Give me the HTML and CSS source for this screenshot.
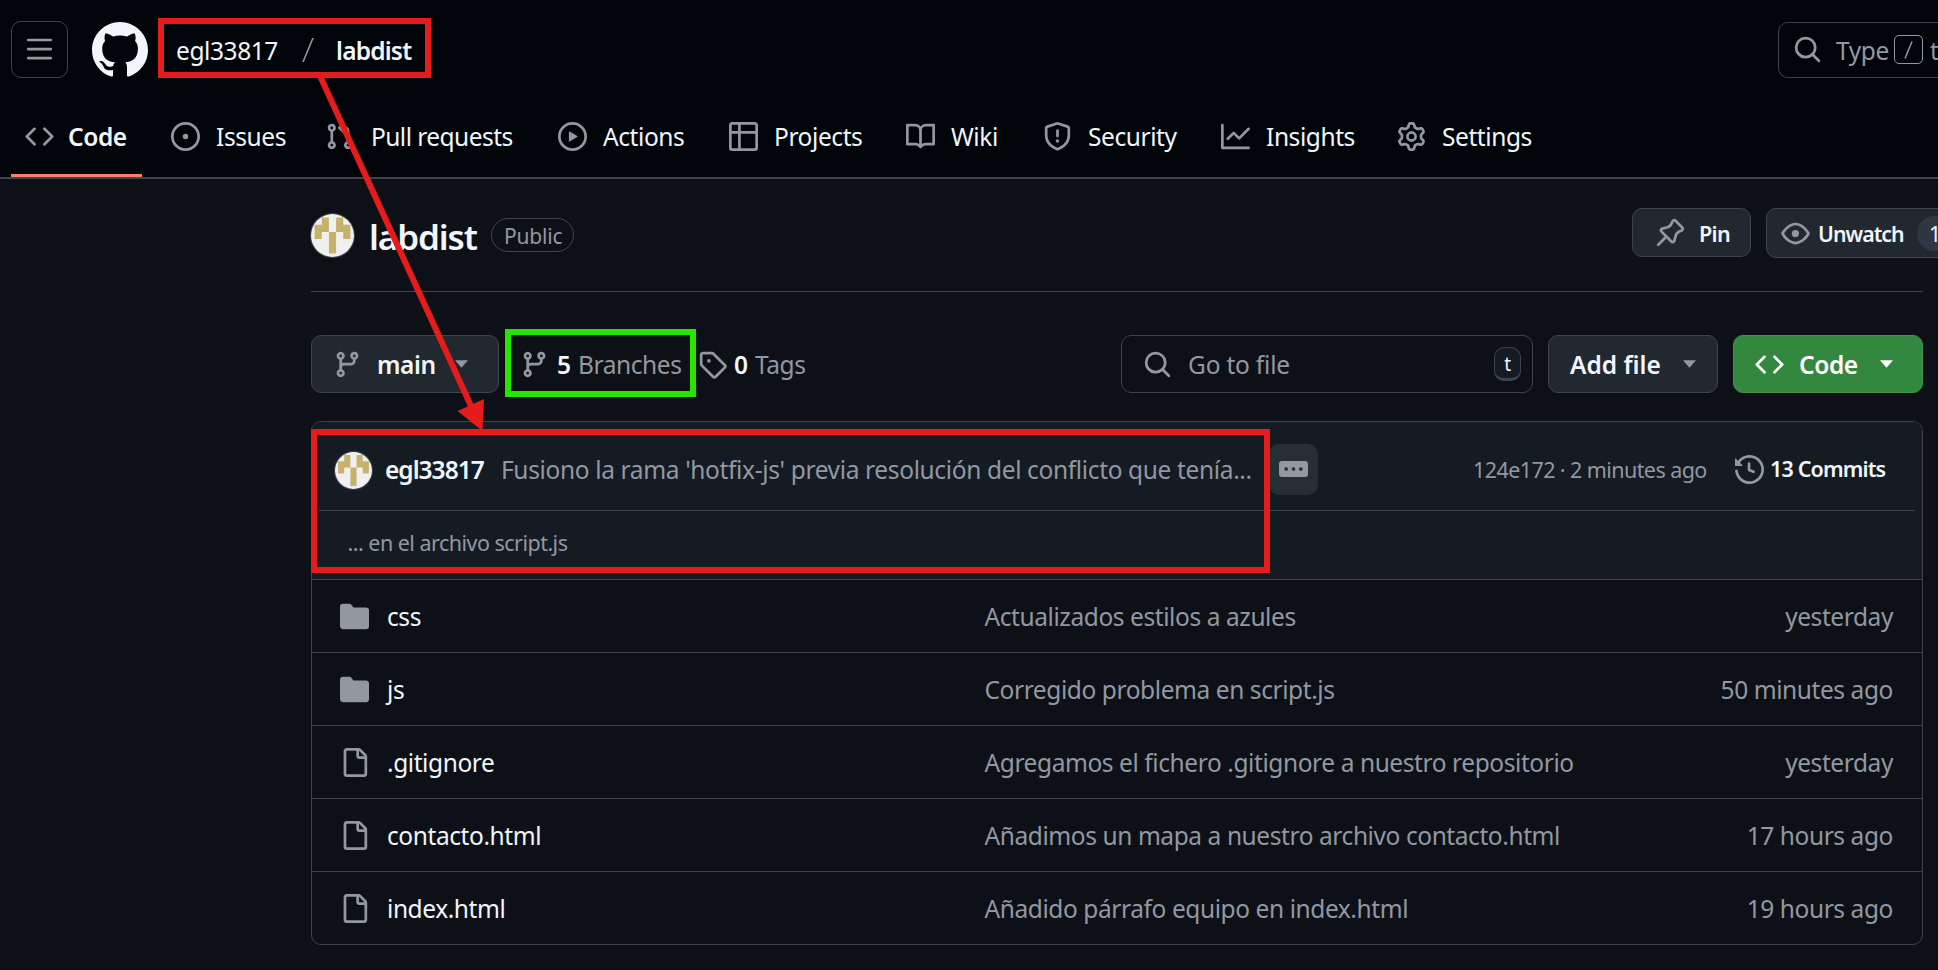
FILE: index.html
```html
<!DOCTYPE html>
<html lang="en">
<head>
<meta charset="utf-8">
<title>egl33817/labdist</title>
<link rel="stylesheet" href="styles.css">
</head>
<body>
<svg class="sprite" aria-hidden="true">
<symbol id="bars" viewBox="0 0 16 16"><path d="M1 2.75A.75.75 0 0 1 1.75 2h12.5a.75.75 0 0 1 0 1.5H1.75A.75.75 0 0 1 1 2.75Zm0 5A.75.75 0 0 1 1.75 7h12.5a.75.75 0 0 1 0 1.5H1.75A.75.75 0 0 1 1 7.75ZM1.75 12h12.5a.75.75 0 0 1 0 1.5H1.75a.75.75 0 0 1 0-1.5Z"/></symbol>
<symbol id="github" viewBox="0 0 16 16"><path d="M8 0c4.42 0 8 3.58 8 8a8.013 8.013 0 0 1-5.45 7.59c-.4.08-.55-.17-.55-.38 0-.27.01-1.13.01-2.2 0-.75-.25-1.23-.54-1.48 1.78-.2 3.65-.88 3.65-3.95 0-.88-.31-1.59-.82-2.15.08-.2.36-1.02-.08-2.12 0 0-.67-.22-2.2.82-.64-.18-1.32-.27-2-.27-.68 0-1.36.09-2 .27-1.53-1.03-2.2-.82-2.2-.82-.44 1.1-.16 1.92-.08 2.12-.51.56-.82 1.28-.82 2.15 0 3.06 1.86 3.75 3.64 3.95-.23.2-.44.55-.51 1.07-.46.21-1.61.55-2.33-.66-.15-.24-.6-.83-1.23-.82-.67.01-.27.38.01.53.34.19.73.9.82 1.13.16.45.68 1.31 2.69.94 0 .67.01 1.3.01 1.49 0 .21-.15.45-.55.38A7.995 7.995 0 0 1 0 8c0-4.42 3.58-8 8-8Z"/></symbol>
<symbol id="code" viewBox="0 0 16 16"><path d="M4.72 3.22a.75.75 0 0 1 1.06 1.06L2.06 8l3.72 3.72a.75.75 0 1 1-1.06 1.06L.47 8.53a.75.75 0 0 1 0-1.06Zm6.56 0a.75.75 0 1 0-1.06 1.06L13.94 8l-3.72 3.72a.75.75 0 1 0 1.06 1.06l4.25-4.25a.75.75 0 0 0 0-1.06Z"/></symbol>
<symbol id="issue" viewBox="0 0 16 16"><path d="M8 9.5a1.5 1.5 0 1 0 0-3 1.5 1.5 0 0 0 0 3Z"/><path d="M8 0a8 8 0 1 1 0 16A8 8 0 0 1 8 0ZM1.5 8a6.5 6.5 0 1 0 13 0 6.5 6.5 0 0 0-13 0Z"/></symbol>
<symbol id="pull" viewBox="0 0 16 16"><path d="M1.5 3.25a2.25 2.25 0 1 1 3 2.122v5.256a2.251 2.251 0 1 1-1.5 0V5.372A2.25 2.25 0 0 1 1.5 3.25Zm5.677-.177L9.573.677A.25.25 0 0 1 10 .854V2.5h1A2.5 2.5 0 0 1 13.5 5v5.628a2.251 2.251 0 1 1-1.5 0V5a1 1 0 0 0-1-1h-1v1.646a.25.25 0 0 1-.427.177L7.177 3.427a.25.25 0 0 1 0-.354ZM3.75 2.5a.75.75 0 1 0 0 1.5.75.75 0 0 0 0-1.5Zm0 9.5a.75.75 0 1 0 0 1.5.75.75 0 0 0 0-1.5Zm8.25.75a.75.75 0 1 0 1.5 0 .75.75 0 0 0-1.5 0Z"/></symbol>
<symbol id="play" viewBox="0 0 16 16"><path d="M8 0a8 8 0 1 1 0 16A8 8 0 0 1 8 0ZM1.5 8a6.5 6.5 0 1 0 13 0 6.5 6.5 0 0 0-13 0Zm4.879-2.773 4.264 2.559a.25.25 0 0 1 0 .428l-4.264 2.559A.25.25 0 0 1 6 10.559V5.442a.25.25 0 0 1 .379-.215Z"/></symbol>
<symbol id="table" viewBox="0 0 16 16"><path d="M0 1.75C0 .784.784 0 1.75 0h12.5C15.216 0 16 .784 16 1.75v12.5A1.75 1.75 0 0 1 14.25 16H1.75A1.75 1.75 0 0 1 0 14.25ZM6.5 6.5v8h7.75a.25.25 0 0 0 .25-.25V6.5Zm8-1.5V1.75a.25.25 0 0 0-.25-.25H6.5V5Zm-13 1.5v7.75c0 .138.112.25.25.25H5v-8ZM5 5V1.5H1.75a.25.25 0 0 0-.25.25V5Z"/></symbol>
<symbol id="book" viewBox="0 0 16 16"><path d="M0 1.75A.75.75 0 0 1 .75 1h4.253c1.227 0 2.317.59 3 1.501A3.743 3.743 0 0 1 11.006 1h4.245a.75.75 0 0 1 .75.75v10.5a.75.75 0 0 1-.75.75h-4.507a2.25 2.25 0 0 0-1.591.659l-.622.621a.75.75 0 0 1-1.06 0l-.622-.621A2.25 2.25 0 0 0 5.258 13H.75a.75.75 0 0 1-.75-.75Zm7.251 10.324.004-5.073-.002-2.253A2.25 2.25 0 0 0 5.003 2.5H1.5v9h3.757a3.75 3.75 0 0 1 1.994.574ZM8.755 4.75l-.004 7.322a3.752 3.752 0 0 1 1.992-.572H14.5v-9h-3.495a2.25 2.25 0 0 0-2.25 2.25Z"/></symbol>
<symbol id="shield" viewBox="0 0 16 16"><path d="M7.467.133a1.748 1.748 0 0 1 1.066 0l5.25 1.68A1.75 1.75 0 0 1 15 3.48V7c0 1.566-.32 3.182-1.303 4.682-.983 1.498-2.585 2.813-5.032 3.855a1.697 1.697 0 0 1-1.33 0c-2.447-1.042-4.049-2.357-5.032-3.855C1.32 10.182 1 8.566 1 7V3.48a1.75 1.75 0 0 1 1.217-1.667Zm.61 1.429a.25.25 0 0 0-.153 0l-5.25 1.68a.25.25 0 0 0-.174.238V7c0 1.358.275 2.666 1.057 3.86.784 1.194 2.121 2.34 4.366 3.297a.196.196 0 0 0 .154 0c2.245-.956 3.582-2.104 4.366-3.298C13.225 9.666 13.5 8.36 13.5 7V3.48a.251.251 0 0 0-.174-.237l-5.25-1.68ZM8.75 4.75v3a.75.75 0 0 1-1.5 0v-3a.75.75 0 0 1 1.5 0ZM9 10.5a1 1 0 1 1-2 0 1 1 0 0 1 2 0Z"/></symbol>
<symbol id="graph" viewBox="0 0 16 16"><path d="M1.5 1.75V13.5h13.75a.75.75 0 0 1 0 1.5H.75a.75.75 0 0 1-.75-.75V1.75a.75.75 0 0 1 1.5 0Zm14.28 2.53-5.25 5.25a.75.75 0 0 1-1.06 0L7 7.06 4.28 9.78a.751.751 0 0 1-1.042-.018.751.751 0 0 1-.018-1.042l3.25-3.25a.75.75 0 0 1 1.06 0L10 7.94l4.72-4.72a.751.751 0 0 1 1.042.018.751.751 0 0 1 .018 1.042Z"/></symbol>
<symbol id="gear" viewBox="0 0 16 16"><path d="M8 0a8.2 8.2 0 0 1 .701.031C9.444.095 9.99.645 10.16 1.29l.288 1.107c.018.066.079.158.212.224.231.114.454.243.668.386.123.082.233.09.299.071l1.103-.303c.644-.176 1.392.021 1.82.63.27.385.506.792.704 1.218.315.675.111 1.422-.364 1.891l-.814.806c-.049.048-.098.147-.088.294.016.257.016.515 0 .772-.01.147.038.246.088.294l.814.806c.475.469.679 1.216.364 1.891a7.977 7.977 0 0 1-.704 1.217c-.428.61-1.176.807-1.82.63l-1.102-.302c-.067-.019-.177-.011-.3.071a5.909 5.909 0 0 1-.668.386c-.133.066-.194.158-.211.224l-.29 1.106c-.168.646-.715 1.196-1.458 1.26a8.006 8.006 0 0 1-1.402 0c-.743-.064-1.289-.614-1.458-1.26l-.289-1.106c-.018-.066-.079-.158-.212-.224a5.738 5.738 0 0 1-.668-.386c-.123-.082-.233-.09-.299-.071l-1.103.303c-.644.176-1.392-.021-1.82-.63a8.12 8.12 0 0 1-.704-1.218c-.315-.675-.111-1.422.363-1.891l.815-.806c.05-.048.098-.147.088-.294a6.214 6.214 0 0 1 0-.772c.01-.147-.038-.246-.088-.294l-.815-.806C.635 6.045.431 5.298.746 4.623a7.92 7.92 0 0 1 .704-1.217c.428-.61 1.176-.807 1.82-.63l1.102.302c.067.019.177.011.3-.071.214-.143.437-.272.668-.386.133-.066.194-.158.211-.224l.29-1.106C6.009.645 6.556.095 7.299.03 7.53.01 7.764 0 8 0Zm-.571 1.525c-.036.003-.108.036-.137.146l-.289 1.105c-.147.561-.549.967-.998 1.189-.173.086-.34.183-.5.29-.417.278-.97.423-1.529.27l-1.103-.303c-.109-.03-.175.016-.195.045-.22.312-.412.644-.573.99-.014.031-.021.11.059.19l.815.806c.411.406.562.957.53 1.456a4.709 4.709 0 0 0 0 .582c.032.499-.119 1.05-.53 1.456l-.815.806c-.081.08-.073.159-.059.19.162.346.353.677.573.989.02.03.085.076.195.046l1.102-.303c.56-.153 1.113-.008 1.53.27.161.107.328.204.501.29.447.222.85.629.997 1.189l.289 1.105c.029.109.101.143.137.146a6.6 6.6 0 0 0 1.142 0c.036-.003.108-.036.137-.146l.289-1.105c.147-.561.549-.967.998-1.189.173-.086.34-.183.5-.29.417-.278.97-.423 1.529-.27l1.103.303c.109.029.175-.016.195-.045.22-.313.411-.644.573-.99.014-.031.021-.11-.059-.19l-.815-.806c-.411-.406-.562-.957-.53-1.456a4.709 4.709 0 0 0 0-.582c-.032-.499.119-1.05.53-1.456l.815-.806c.081-.08.073-.159.059-.19a6.464 6.464 0 0 0-.573-.989c-.02-.03-.085-.076-.195-.046l-1.102.303c-.56.153-1.113.008-1.53-.27a4.44 4.44 0 0 0-.501-.29c-.447-.222-.85-.629-.997-1.189l-.289-1.105c-.029-.11-.101-.143-.137-.146a6.6 6.6 0 0 0-1.142 0ZM11 8a3 3 0 1 1-6 0 3 3 0 0 1 6 0ZM9.5 8a1.5 1.5 0 1 0-3.001.001A1.5 1.5 0 0 0 9.5 8Z"/></symbol>
<symbol id="search" viewBox="0 0 16 16"><path d="M10.68 11.74a6 6 0 0 1-7.922-8.982 6 6 0 0 1 8.982 7.922l3.04 3.04a.749.749 0 0 1-.326 1.275.749.749 0 0 1-.734-.215ZM11.5 7a4.499 4.499 0 1 0-8.997 0A4.499 4.499 0 0 0 11.5 7Z"/></symbol>
<symbol id="pin" viewBox="0 0 16 16"><path d="m11.294.984 3.722 3.722a1.75 1.75 0 0 1-.504 2.826l-1.327.613a3.089 3.089 0 0 0-1.707 2.084l-.584 2.454c-.317 1.332-1.972 1.8-2.94.832L5.75 11.311 1.78 15.28a.749.749 0 1 1-1.06-1.06l3.969-3.97-2.204-2.204c-.968-.968-.5-2.623.832-2.94l2.454-.584a3.08 3.08 0 0 0 2.084-1.707l.613-1.327a1.75 1.75 0 0 1 2.826-.504ZM6.283 9.723l2.732 2.731a.25.25 0 0 0 .42-.119l.584-2.454a4.586 4.586 0 0 1 2.537-3.098l1.328-.613a.25.25 0 0 0 .072-.404l-3.722-3.722a.25.25 0 0 0-.404.072l-.613 1.328a4.584 4.584 0 0 1-3.098 2.537l-2.454.584a.25.25 0 0 0-.119.42l2.731 2.732Z"/></symbol>
<symbol id="eye" viewBox="0 0 16 16"><path d="M8 2c1.981 0 3.671.992 4.933 2.078 1.27 1.091 2.187 2.345 2.637 3.023a1.62 1.62 0 0 1 0 1.798c-.45.678-1.367 1.932-2.637 3.023C11.67 13.008 9.981 14 8 14c-1.981 0-3.671-.992-4.933-2.078C1.797 10.83.88 9.576.43 8.898a1.62 1.62 0 0 1 0-1.798c.45-.677 1.367-1.931 2.637-3.022C4.33 2.992 6.019 2 8 2ZM1.679 7.932a.12.12 0 0 0 0 .136c.411.622 1.241 1.75 2.366 2.717C5.176 11.758 6.527 12.5 8 12.5c1.473 0 2.825-.742 3.955-1.715 1.124-.967 1.954-2.096 2.366-2.717a.12.12 0 0 0 0-.136c-.412-.621-1.242-1.75-2.366-2.717C10.824 4.242 9.473 3.5 8 3.5c-1.473 0-2.825.742-3.955 1.715-1.124.967-1.954 2.096-2.366 2.717ZM8 10a2 2 0 1 1-.001-3.999A2 2 0 0 1 8 10Z"/></symbol>
<symbol id="branch" viewBox="0 0 16 16"><path d="M9.5 3.25a2.25 2.25 0 1 1 3 2.122V6A2.5 2.5 0 0 1 10 8.5H6a1 1 0 0 0-1 1v1.128a2.251 2.251 0 1 1-1.5 0V5.372a2.25 2.25 0 1 1 1.5 0v1.836A2.493 2.493 0 0 1 6 7h4a1 1 0 0 0 1-1v-.628A2.25 2.25 0 0 1 9.5 3.25Zm-6 0a.75.75 0 1 0 1.5 0 .75.75 0 0 0-1.5 0Zm8.25-.75a.75.75 0 1 0 0 1.5.75.75 0 0 0 0-1.5ZM4.25 12a.75.75 0 1 0 0 1.5.75.75 0 0 0 0-1.5Z"/></symbol>
<symbol id="tag" viewBox="0 0 16 16"><path d="M1 7.775V2.75C1 1.784 1.784 1 2.75 1h5.025c.464 0 .91.184 1.238.513l6.25 6.25a1.75 1.75 0 0 1 0 2.474l-5.026 5.026a1.75 1.75 0 0 1-2.474 0l-6.25-6.25A1.752 1.752 0 0 1 1 7.775Zm1.5 0c0 .066.026.13.073.177l6.25 6.25a.25.25 0 0 0 .354 0l5.025-5.025a.25.25 0 0 0 0-.354l-6.25-6.25a.25.25 0 0 0-.177-.073H2.75a.25.25 0 0 0-.25.25ZM6 5a1 1 0 1 1 0 2 1 1 0 0 1 0-2Z"/></symbol>
<symbol id="history" viewBox="0 0 16 16"><path d="m.427 1.927 1.215 1.215a8.002 8.002 0 1 1-1.6 5.685.75.75 0 1 1 1.493-.154 6.5 6.5 0 1 0 1.18-4.458l1.358 1.358A.25.25 0 0 1 3.896 6H.25A.25.25 0 0 1 0 5.75V2.104a.25.25 0 0 1 .427-.177ZM7.75 4a.75.75 0 0 1 .75.75v2.992l2.028.812a.75.75 0 0 1-.557 1.392l-2.5-1A.751.751 0 0 1 7 8.25v-3.5A.75.75 0 0 1 7.75 4Z"/></symbol>
<symbol id="file" viewBox="0 0 16 16"><path d="M2 1.75C2 .784 2.784 0 3.75 0h6.586c.464 0 .909.184 1.237.513l2.914 2.914c.329.328.513.773.513 1.237v9.586A1.75 1.75 0 0 1 13.25 16h-9.5A1.75 1.75 0 0 1 2 14.25Zm1.75-.25a.25.25 0 0 0-.25.25v12.5c0 .138.112.25.25.25h9.5a.25.25 0 0 0 .25-.25V6h-2.75A1.75 1.75 0 0 1 9 4.25V1.5Zm6.75.062V4.25c0 .138.112.25.25.25h2.688l-.011-.013-2.914-2.914-.013-.011Z"/></symbol>
<symbol id="folder" viewBox="0 0 16 16"><path d="M1.75 1A1.75 1.75 0 0 0 0 2.75v10.5C0 14.216.784 15 1.75 15h12.5A1.75 1.75 0 0 0 16 13.25v-8.5A1.75 1.75 0 0 0 14.25 3H7.5a.25.25 0 0 1-.2-.1l-.9-1.2C6.07 1.26 5.55 1 5 1H1.75Z"/></symbol>
<symbol id="caret" viewBox="0 0 14 8"><path d="M0 0h14L7 8z"/></symbol>
<symbol id="dots" viewBox="0 0 29 16"><path fill-rule="evenodd" d="M3 0h23a3 3 0 0 1 3 3v10a3 3 0 0 1-3 3H3a3 3 0 0 1-3-3V3a3 3 0 0 1 3-3zM7.200 6.200a1.800 1.800 0 1 0 .01 0zm7.300 0a1.800 1.800 0 1 0 .01 0zm7.300 0a1.800 1.800 0 1 0 .01 0z"/></symbol>
<symbol id="avatar" viewBox="0 0 12 12"><path fill="#f0f0f0" d="M0 0h12v12H0z"/><path fill="#c8b16b" d="M3 1h2v4H3v2H1V3h2zM7 1h2v2h2v4H9V5H7zM5 5h2v6H5z"/></symbol>
</svg>

<header class="header">
  <div class="topbar">
    <button class="menu"><svg class="icon"><use href="#bars"/></svg></button>
    <svg class="logo"><use href="#github"/></svg>
    <span class="text owner">egl33817</span>
    <svg class="slash" viewBox="0 0 12 26"><path d="M1 25 11 1"/></svg>
    <span class="text repo">labdist</span>
    <div class="global-search"><svg class="icon"><use href="#search"/></svg><span class="text type">Type</span><kbd class="slash-key"><svg class="key-slash" viewBox="0 0 9 18"><path d="M1 17.500 8 .5"/></svg></kbd><span class="text to">t</span></div>
  </div>
  <nav class="tabs">
    <a class="tab active"><svg class="icon"><use href="#code"/></svg><span class="text b">Code</span></a>
    <a class="tab"><svg class="icon"><use href="#issue"/></svg><span class="text">Issues</span></a>
    <a class="tab pulls"><svg class="icon"><use href="#pull"/></svg><span class="text">Pull requests</span></a>
    <a class="tab"><svg class="icon"><use href="#play"/></svg><span class="text">Actions</span></a>
    <a class="tab"><svg class="icon"><use href="#table"/></svg><span class="text">Projects</span></a>
    <a class="tab"><svg class="icon"><use href="#book"/></svg><span class="text">Wiki</span></a>
    <a class="tab"><svg class="icon"><use href="#shield"/></svg><span class="text">Security</span></a>
    <a class="tab"><svg class="icon"><use href="#graph"/></svg><span class="text">Insights</span></a>
    <a class="tab"><svg class="icon"><use href="#gear"/></svg><span class="text">Settings</span></a>
  </nav>
</header>

<main class="main">
  <section class="title-row">
    <svg class="avatar large"><use href="#avatar"/></svg>
    <h1 class="text title">labdist</h1>
    <span class="badge"><span class="text">Public</span></span>
    <button class="btn pin"><svg class="icon"><use href="#pin"/></svg><span class="text">Pin</span></button>
    <button class="btn watch"><svg class="icon"><use href="#eye"/></svg><span class="text">Unwatch</span><span class="count"><span class="text">1</span></span></button>
  </section>

  <section class="toolbar">
    <button class="btn branch"><svg class="icon"><use href="#branch"/></svg><span class="text b">main</span><svg class="caret"><use href="#caret"/></svg></button>
    <a class="stat branches"><svg class="icon"><use href="#branch"/></svg><span class="text b num">5</span><span class="text muted">Branches</span></a>
    <a class="stat tags"><svg class="icon"><use href="#tag"/></svg><span class="text b num">0</span><span class="text muted">Tags</span></a>
    <div class="find"><svg class="icon"><use href="#search"/></svg><span class="text muted">Go to file</span><kbd class="key"><span class="text">t</span></kbd></div>
    <button class="btn add"><span class="text b">Add file</span><svg class="caret"><use href="#caret"/></svg></button>
    <button class="btn green"><svg class="icon"><use href="#code"/></svg><span class="text b">Code</span><svg class="caret"><use href="#caret"/></svg></button>
  </section>

  <section class="files">
    <div class="commit">
      <div class="commit-line">
        <svg class="avatar small"><use href="#avatar"/></svg>
        <span class="text b author">egl33817</span>
        <span class="text muted message">Fusiono la rama 'hotfix-js' previa resolución del conflicto que tenía...</span>
        <button class="expand"><svg class="dots"><use href="#dots"/></svg></button>
        <span class="text muted meta">124e172 · 2 minutes ago</span>
        <svg class="icon"><use href="#history"/></svg>
        <span class="text b commits">13 Commits</span>
      </div>
      <div class="commit-body"><span class="text muted">... en el archivo script.js</span></div>
    </div>
    <div class="row"><svg class="icon"><use href="#folder"/></svg><span class="text">css</span><span class="text muted">Actualizados estilos a azules</span><span class="text muted">yesterday</span></div>
    <div class="row"><svg class="icon"><use href="#folder"/></svg><span class="text">js</span><span class="text muted">Corregido problema en script.js</span><span class="text muted">50 minutes ago</span></div>
    <div class="row"><svg class="icon"><use href="#file"/></svg><span class="text">.gitignore</span><span class="text muted">Agregamos el fichero .gitignore a nuestro repositorio</span><span class="text muted">yesterday</span></div>
    <div class="row"><svg class="icon"><use href="#file"/></svg><span class="text">contacto.html</span><span class="text muted">Añadimos un mapa a nuestro archivo contacto.html</span><span class="text muted">17 hours ago</span></div>
    <div class="row"><svg class="icon"><use href="#file"/></svg><span class="text">index.html</span><span class="text muted">Añadido párrafo equipo en index.html</span><span class="text muted">19 hours ago</span></div>
  </section>
</main>

<div class="mark mark-repo"></div>
<div class="mark mark-branches"></div>
<div class="mark mark-commit"></div>
<svg class="arrow" viewBox="0 0 1938 970"><path class="shaft" d="M320.500 77 471 406"/><path class="head" d="M457.500 411 484 399 482.500 431z"/></svg>
</body>
</html>
```
FILE: styles.css
```css
* { box-sizing: border-box; }
body { margin: 0; width: 1938px; height: 970px; overflow: hidden; background: #0d1117; color: #f0f6fc; font-family: "Noto Sans", sans-serif; font-size: 24.5px; letter-spacing: -0.42px; }
button, kbd { font: inherit; letter-spacing: inherit; color: inherit; margin: 0; padding: 0; text-align: left; }
.sprite { position: absolute; width: 0; height: 0; }
.text { display: block; flex: none; padding-top: 2px; white-space: nowrap; line-height: 34px; }
.b { font-weight: 600; }
.muted { color: #9198a1; }
.icon { flex: none; width: 29px; height: 29px; fill: #9198a1; }
.caret { flex: none; width: 13px; height: 8px; fill: #9198a1; }

.header { height: 179px; background: #010409; border-bottom: 2px solid #3d444d; }
.topbar { display: flex; align-items: center; height: 99px; padding-left: 11px; }
.menu { flex: none; display: flex; align-items: center; justify-content: center; width: 57px; height: 57px; border: 1px solid #3d444d; border-radius: 10px; background: none; }
.logo { flex: none; width: 56px; height: 56px; margin-left: 24px; fill: #f0f6fc; }
.owner { width: 126px; margin-left: 28px; }
.slash { flex: none; width: 12px; height: 26px; stroke: #9198a1; stroke-width: 1.6; fill: none; }
.repo { width: 100px; margin-left: 22px; font-weight: 600; letter-spacing: -0.8px; }
.global-search { flex: none; display: flex; align-items: center; width: 400px; height: 56px; margin-left: 1342px; padding-left: 14px; border: 1px solid #3d444d; border-radius: 10px; color: #9198a1; }
.type { width: 58px; margin-left: 14px; }
.slash-key { flex: none; display: flex; align-items: center; justify-content: center; width: 29px; height: 29px; border: 1px solid #9198a1; border-radius: 5px; }
.key-slash { width: 9px; height: 18px; stroke: #9198a1; stroke-width: 1.5; }
.to { margin-left: 7px; }

.tabs { display: grid; grid-template-columns: 146px 153.500px 233.500px 171px 177px 137px 178px 176px 160px; height: 78px; padding-left: 11px; }
.tab { display: flex; align-items: center; gap: 16px; padding: 0 0 4px 14px; }
.tab.active { width: 130.500px; gap: 14px; border-bottom: 3px solid #f78166; padding-bottom: 1px; }
.tab.pulls { gap: 17.500px; letter-spacing: -0.55px; }

.main { width: 1611.500px; margin-left: 311px; }
.title-row { display: flex; align-items: center; height: 113px; border-bottom: 1px solid #3d444d; }
.avatar { flex: none; border-radius: 50%; box-shadow: 0 0 0 1px #3d444d; }
.large { width: 43px; height: 43px; }
.title { width: 122px; margin: 0 0 0 15px; padding-top: 3px; font-size: 35px; font-weight: 600; line-height: 48px; letter-spacing: -1.1px; }
.badge { flex: none; display: flex; align-items: center; width: 83px; height: 34px; padding-left: 12px; border: 1px solid #3d444d; border-radius: 17px; color: #9198a1; font-size: 21px; letter-spacing: -0.2px; }
.btn { flex: none; display: flex; align-items: center; border: 1px solid #3d444d; border-radius: 10px; background: #212830; }
.pin { width: 119px; height: 49px; margin: 0 0 5px 1058px; padding-left: 23px; gap: 14px; font-size: 21.500px; font-weight: 600; letter-spacing: -0.6px; }
.watch { width: 260px; height: 50px; margin: 0 0 4px 15px; padding-left: 14px; gap: 8px; font-size: 21.300px; font-weight: 600; letter-spacing: -1px; }
.watch > .text { width: 91px; }
.count { width: 60px; height: 35px; padding-left: 12px; border-radius: 18px; background: #2f3742; font-weight: 400; }
.count .text { padding-top: 1px; }

.toolbar { display: flex; align-items: center; height: 58px; margin-top: 43px; }
.branch { width: 188px; height: 58px; padding-left: 21px; }
.branch .text { width: 78px; margin-left: 15px; }
.stat { flex: none; display: flex; align-items: center; }
.branches { width: 178px; margin-left: 21px; }
.tags { width: 423px; }
.num { width: 21px; margin-left: 8px; }
.tags .num { margin-left: 7px; }
.find { flex: none; display: flex; align-items: center; width: 412px; height: 58px; padding-left: 21px; border: 1px solid #3d444d; border-radius: 10px; }
.find .muted { width: 306px; margin-left: 16px; letter-spacing: -0.2px; }
.key { display: flex; justify-content: center; align-items: center; width: 27px; height: 34px; border: 1px solid #3d444d; border-bottom-width: 3px; border-radius: 10px; background: #151b23; font-size: 19px; }
.add { width: 170px; height: 58px; margin-left: 15px; padding-left: 21px; letter-spacing: 0; }
.add .text { width: 113px; }
.green { width: 190px; height: 58px; margin-left: 15px; padding-left: 21px; background: #33873f; border-color: #46954f; color: #fff; }
.green .icon, .green .caret { fill: #fff; }
.green .text { width: 81px; margin-left: 15px; }

.files { width: 1612px; height: 524px; margin-top: 28px; border: 1px solid #3d444d; border-radius: 10px; overflow: hidden; }
.commit { height: 157px; padding: 0 7px; background: #151b23; }
.commit-line { display: flex; align-items: center; height: 89px; padding: 6px 0 0 16px; border-bottom: 1px solid #3d444d; }
.commit-line .small { width: 37px; height: 37px; margin-top: 2px; }
.author { width: 116px; margin-left: 13px; letter-spacing: -1px; }
.message { width: 768px; letter-spacing: -0.36px; }
.expand { flex: none; display: flex; align-items: center; justify-content: center; width: 49px; height: 51px; border: 0; border-radius: 10px; background: #282e36; }
.dots { width: 29px; height: 16px; fill: #9198a1; }
.meta { width: 262px; margin-left: 155px; font-size: 21.500px; letter-spacing: -0.58px; }
.commits { margin-left: 6px; padding-top: 0; font-size: 21.500px; letter-spacing: -0.85px; }
.commit-body { padding: 13px 0 0 28.500px; font-size: 21.500px; letter-spacing: -0.52px; }
.row { display: grid; grid-template-columns: 29px 615.500px 1fr auto; align-items: center; height: 73px; padding: 0 29px 0 28px; border-top: 1px solid #3d444d; }
.row .text:nth-child(2) { padding-left: 18px; }

.mark { position: absolute; border: 6px solid #e61b1b; }
.mark-repo { left: 158px; top: 18px; width: 273px; height: 60px; }
.mark-branches { left: 505px; top: 329px; width: 191px; height: 68px; border-color: #26e600; }
.mark-commit { left: 311px; top: 429px; width: 959px; height: 144px; }
.arrow { position: absolute; left: 0; top: 0; width: 1938px; height: 970px; }
.shaft { stroke: #e61b1b; stroke-width: 6; }
.head { fill: #e61b1b; }
```
